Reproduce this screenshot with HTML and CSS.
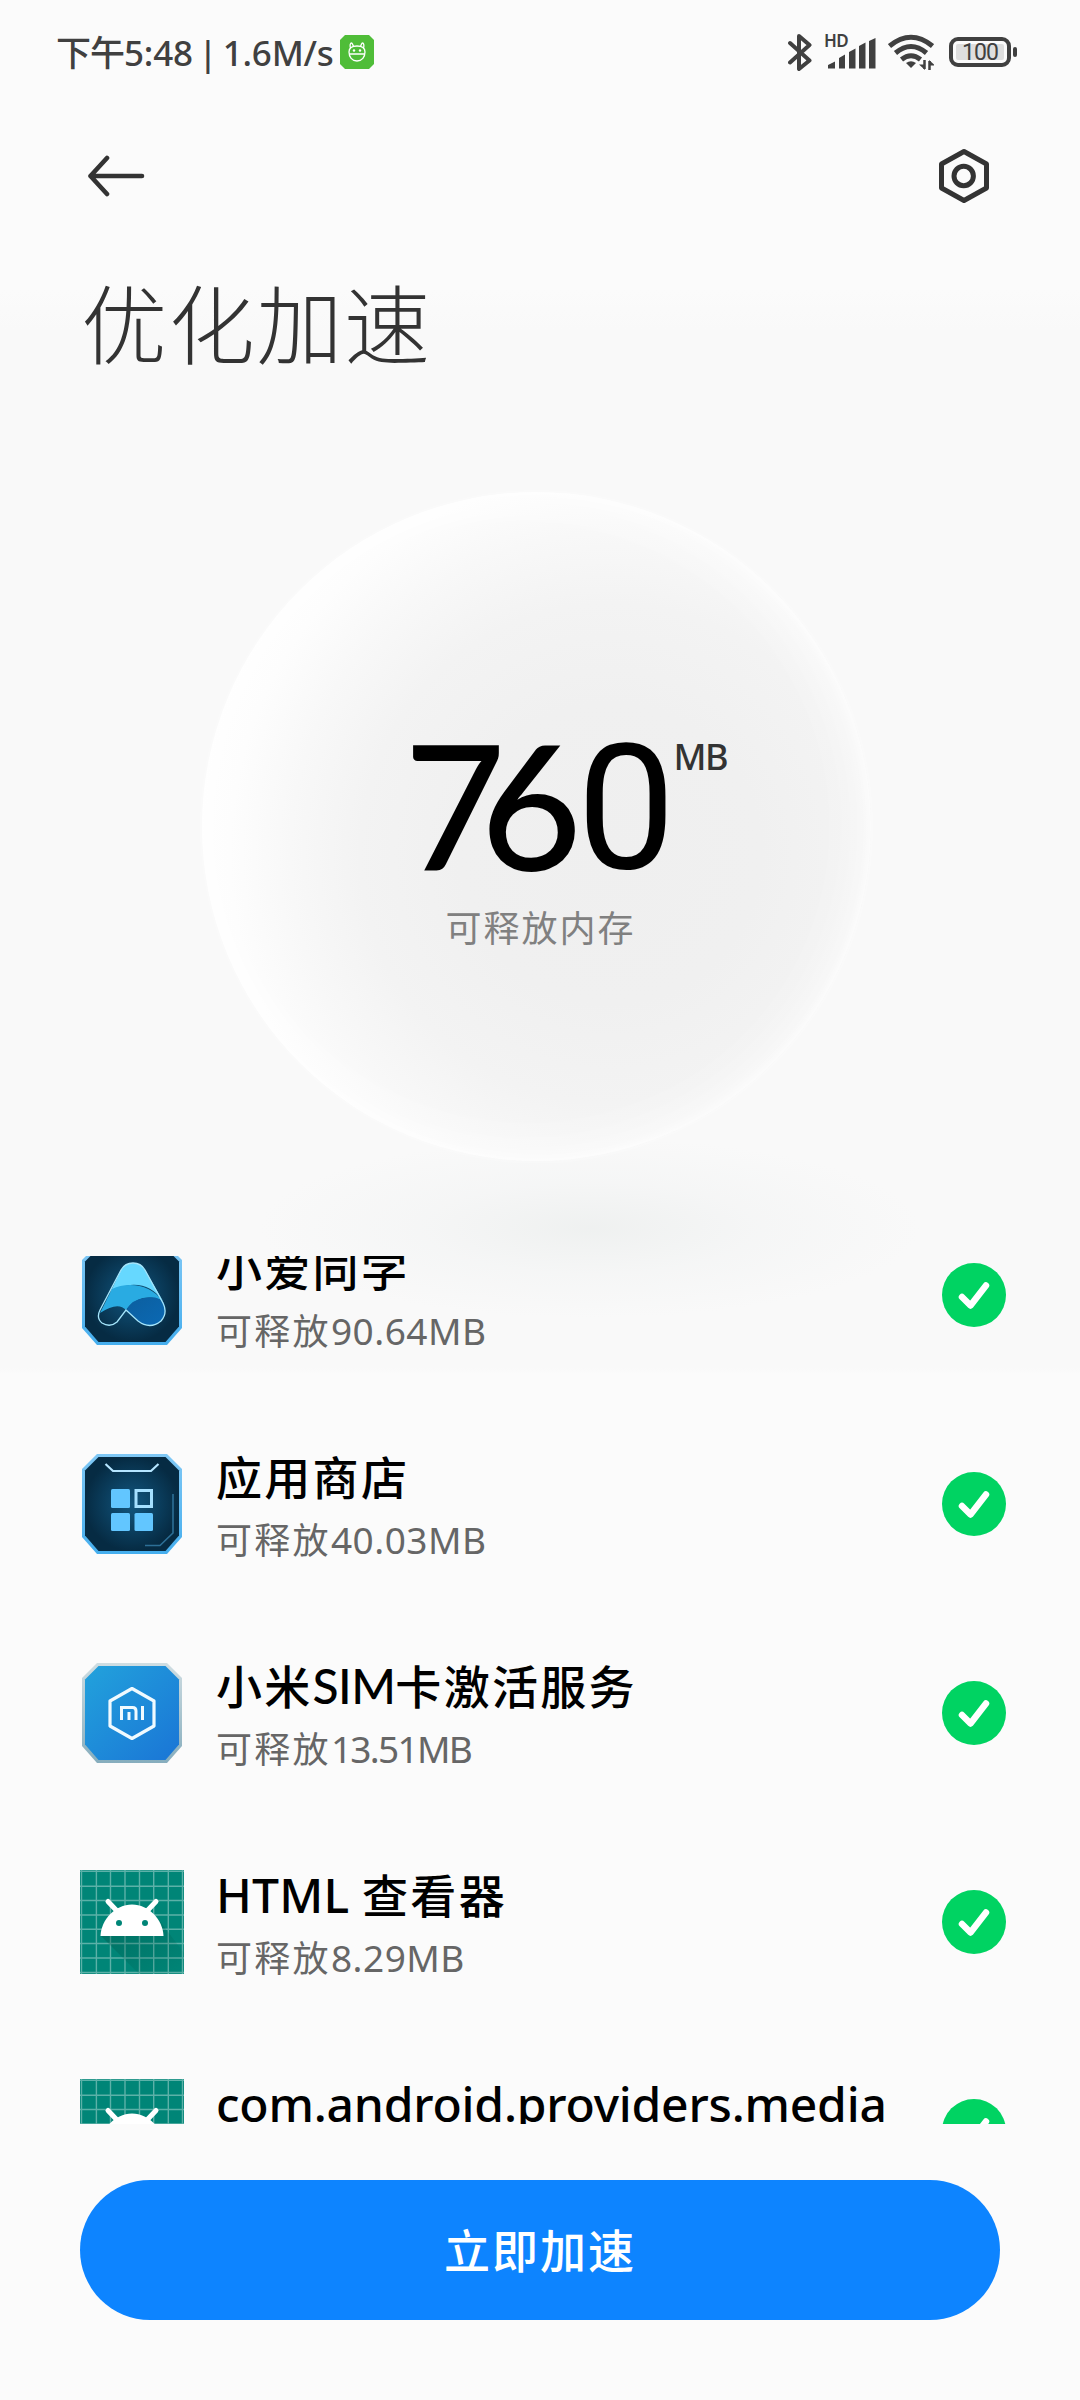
FILE: index.html
```html
<!DOCTYPE html>
<html lang="zh-CN">
<head>
<meta charset="utf-8">
<title>优化加速</title>
<link rel="stylesheet" href="styles.css">
</head>
<body>
<svg width="0" height="0" class="defs" aria-hidden="true">
  <defs>
    <radialGradient id="navy"><stop offset="0" stop-color="#12567f"/><stop offset=".55" stop-color="#0b3f5f"/><stop offset="1" stop-color="#062b43"/></radialGradient>
    <linearGradient id="edge" x1="0" y1="0" x2="0" y2="1"><stop offset="0" stop-color="#80c8f5"/><stop offset="1" stop-color="#45aeee"/></linearGradient>
    <linearGradient id="simEdge" x1="0" y1="0" x2="0" y2="1"><stop offset="0" stop-color="#cfdde2"/><stop offset="1" stop-color="#86adbd"/></linearGradient>
    <linearGradient id="sim" x1="0" y1="0" x2="1" y2="1"><stop offset="0" stop-color="#22a2dc"/><stop offset="1" stop-color="#1a75d6"/></linearGradient>
    <linearGradient id="wave" x1="0" y1="0" x2="1" y2="1"><stop offset="0" stop-color="#0c5f9f"/><stop offset="1" stop-color="#0b69b4"/></linearGradient>
    <linearGradient id="cast" x1="0" y1="0" x2="1" y2="1"><stop offset="0" stop-color="#004d40" stop-opacity=".4"/><stop offset="1" stop-color="#004d40" stop-opacity="0"/></linearGradient>
    <g id="droid">
      <path fill="#008577" d="M0 0H104V104H0Z"/>
      <path fill="none" stroke="#fff" stroke-opacity=".36" stroke-width="1.400" d="M1.500 0V104M16.400 0V104M30.500 0V104M45 0V104M59.500 0V104M73.700 0V104M88.300 0V104M102.500 0V104M0 1.300H104M0 16.300H104M0 30.500H104M0 45H104M0 59.300H104M0 73.500H104M0 88H104M0 102.500H104"/>
      <path fill="url(#cast)" d="M21 66L59 104H104V83L76 46Z"/>
      <path fill="#fff" d="M20.500 66C21 50 35 34.500 52 34.500S83 50 83.500 66Z"/>
      <path stroke="#fff" stroke-width="5" stroke-linecap="round" d="M28 31.500L37 41M76 31.500L67 41"/>
      <circle cx="39" cy="53" r="3" fill="#008577"/><circle cx="65" cy="53" r="3" fill="#008577"/>
    </g>
    <g id="tick"><circle cx="32" cy="32" r="32" fill="#00d362"/><path d="M20 34L28.500 42.500L44 22.500" fill="none" stroke="#fff" stroke-width="6.500" stroke-linecap="round" stroke-linejoin="round"/></g>
  </defs>
</svg>
<div class="screen">
  <div class="statusbar">
    <span class="clock"><span class="han">下午</span>5:48 | 1.6M/s</span>
    <svg class="notice" width="34" height="34" viewBox="0 0 34 34"><path d="M5 0H29L34 5V29L29 34H5L0 29V5Z" fill="#4fbd38"/><path d="M9 17C9 13 12 11 17 11S25 13 25 17C25 22 22 26 17 26S9 22 9 17ZM9 19H25M10.500 13.500C9.500 10 10.500 8 11.500 8S12.500 10 13.500 11M23.500 13.500C24.500 10 23.500 8 22.500 8S21.500 10 20.500 11" fill="none" stroke="#fff" stroke-width="1.300"/><circle cx="14" cy="15.500" r="1.200" fill="#fff"/><circle cx="20" cy="15.500" r="1.200" fill="#fff"/></svg>
    <div class="sys">
      <svg width="24" height="39" viewBox="0 0 24 39"><path d="M2 10L21.500 27.500L11 36V3L21.500 12L2 29.500" fill="none" stroke="#404040" stroke-width="4" stroke-linejoin="round" stroke-linecap="round"/></svg>
      <div class="signal">
        <span class="hd">HD</span>
        <svg width="48" height="31" viewBox="0 0 48 31" fill="#404040"><path d="M0 27L7 23.500V30.500H0ZM11 20L17 16.500V30.500H11ZM21 14L27.500 10.500V30.500H21ZM31 8L37.500 4.500V30.500H31ZM41 3L47.500 0V30.500H41Z"/></svg>
      </div>
      <svg class="wifi" width="46" height="37" viewBox="0 0 46 37"><g fill="none" stroke="#404040" stroke-width="5"><path d="M1.500 12Q23 -5.500 44.500 12"/><path d="M7.500 19Q23 6 38.500 19"/><path d="M13.500 25.500Q23 18 32.500 25.500"/></g><path d="M18 29Q23 25.500 28 29L23 34Z" fill="#404040"/><path d="M36.500 26V35M41.500 36V27" stroke="#404040" stroke-width="2.500"/><path d="M31 30.500H37V36ZM47 31.500H41V26Z" fill="#404040"/></svg>
      <div class="battery"><span class="level">100</span></div>
    </div>
  </div>

  <div class="appbar">
    <svg width="58" height="42" viewBox="0 0 58 42"><path d="M20 3L3.500 21L20 39M3.500 21H55" fill="none" stroke="#333" stroke-width="4.600" stroke-linecap="round" stroke-linejoin="round"/></svg>
    <svg width="52" height="56" viewBox="0 0 52 56" fill="none" stroke="#333" stroke-width="5"><path stroke-linejoin="round" d="M26 3.500L48.500 16V40L26 52.500L3.500 40V16Z"/><circle cx="25.700" cy="28" r="9.700"/></svg>
  </div>
  <h1 class="title">优化加速</h1>

  <div class="hero">
    <div class="sphere">
      <div class="amount"><span class="seven">7</span><span class="six">6</span><span class="zero">0</span><sup class="unit">MB</sup></div>
      <div class="caption">可释放内存</div>
    </div>
  </div>

  <div class="list">
    <div class="rows">
      <div class="row">
        <svg class="icon" viewBox="0 0 104 104"><path fill="url(#edge)" d="M17 2H87L102 17V85L87 102H17L2 85V17Z"/><path fill="url(#navy)" d="M18.500 5H85.500L99 18.500V83.500L85.500 99H18.500L5 83.500V18.500Z"/>
          <path fill="#66d8ff" d="M41 27Q45 20 53 20T65 27L83 58Q70 40 50 42Q37 44 30 50Z"/>
          <path fill="#29abe2" d="M32 46Q40 42 50 42Q70 42 83 58Q74 53 63 55Q52 58 46 67Q38 58 20 70Z"/>
          <path fill="url(#wave)" d="M46 67Q53 56 64 55Q78 52 84 60Q88 72 79 80Q68 86 58 78Z"/>
          <path fill="none" stroke="#a5e5fb" stroke-width="1.300" d="M41 27Q45 20 53 20T65 27L83 60Q88 70 81 78Q70 87 58 78L46 67L37 79Q30 85 22 80Q16 75 20 67Z"/></svg>
        <div class="text"><div class="name"><span class="han">小爱同学</span></div><div class="free"><span class="han">可释放</span>90.64MB</div></div>
        <svg class="check" viewBox="0 0 64 64"><use href="#tick"/></svg>
      </div>
      <div class="row">
        <svg class="icon" viewBox="0 0 104 104"><path fill="url(#edge)" d="M17 2H87L102 17V85L87 102H17L2 85V17Z"/><path fill="url(#navy)" d="M18.500 5H85.500L99 18.500V83.500L85.500 99H18.500L5 83.500V18.500Z"/>
          <path fill="none" stroke="#b5e5ff" stroke-width="2.200" d="M25.500 12L33 19H71L78.500 12"/><path fill="none" stroke="#2c6f96" stroke-width="1.600" d="M93 42V81L80 93.500H65"/>
          <g fill="#62c6ff"><rect x="31" y="37" width="19" height="19" rx="1.500"/><rect x="31" y="61" width="19" height="18" rx="1.500"/><rect x="54.500" y="61" width="18.500" height="18" rx="1.500"/></g><rect x="56" y="38.500" width="15.500" height="16" fill="none" stroke="#a5e0ff" stroke-width="3"/></svg>
        <div class="text"><div class="name"><span class="han">应用商店</span></div><div class="free"><span class="han">可释放</span>40.03MB</div></div>
        <svg class="check" viewBox="0 0 64 64"><use href="#tick"/></svg>
      </div>
      <div class="row">
        <svg class="icon" viewBox="0 0 104 104"><path fill="url(#simEdge)" d="M17 2H87L102 17V85L87 102H17L2 85V17Z"/><path fill="url(#sim)" d="M18.500 5H85.500L99 18.500V83.500L85.500 99H18.500L5 83.500V18.500Z"/>
          <g fill="none" stroke="#f0faff"><path stroke-width="3.200" stroke-linejoin="round" d="M52 27.500L74 40V65L52 77.500L30 65V40Z"/><path stroke-width="3" d="M41.500 59V46.500H52.500Q56 46.500 56 50V59M49 51V59M62.500 45V59"/></g></svg>
        <div class="text"><div class="name"><span class="han">小米</span><span class="sim">SIM</span><span class="han">卡激活服务</span></div><div class="free"><span class="han">可释放</span><span class="ones">13.51MB</span></div></div>
        <svg class="check" viewBox="0 0 64 64"><use href="#tick"/></svg>
      </div>
      <div class="row">
        <svg class="icon" viewBox="0 0 104 104"><use href="#droid"/></svg>
        <div class="text"><div class="name"><span class="html">HTML </span><span class="han">查看器</span></div><div class="free"><span class="han">可释放</span>8.29MB</div></div>
        <svg class="check" viewBox="0 0 64 64"><use href="#tick"/></svg>
      </div>
      <div class="row">
        <svg class="icon" viewBox="0 0 104 104"><use href="#droid"/></svg>
        <div class="text"><div class="name"><span class="package">com.android.providers.media</span></div></div>
        <svg class="check" viewBox="0 0 64 64"><use href="#tick"/></svg>
      </div>
    </div>
  </div>

  <div class="footer"><button class="boost">立即加速</button></div>
</div>
</body>
</html>
```
FILE: styles.css
```css
* { box-sizing: border-box; }
body { margin: 0; background: #fbfbfb; font-family: "Noto Sans", "Noto Sans CJK SC", sans-serif; }
svg { display: block; flex: none; }
.defs { position: absolute; }
.screen {
  width: 1080px; height: 2400px; overflow: hidden;
  display: flex; flex-direction: column;
  background:
    radial-gradient(330px 90px at 590px 1228px, rgba(232, 235, 234, .6), rgba(238, 240, 240, .35) 50%, rgba(249, 249, 249, 0)),
    linear-gradient(#fbfbfb 290px, #f9f9f9 330px, #f9f9f9 1368px, #fbfbfb 1374px);
}

.statusbar { height: 104px; padding: 0 62px 0 56px; display: flex; align-items: center; }
.clock { width: 276px; font-size: 35px; line-height: 48px; font-weight: 500; color: #404040; white-space: pre; letter-spacing: -.2px; word-spacing: -3.500px; padding-top: 1px; }
.clock .han { letter-spacing: -1px; }
.notice { margin-left: 8px; }
.sys { margin-left: auto; display: flex; align-items: center; }
.signal { position: relative; width: 52px; height: 34px; margin-left: 12px; display: flex; align-items: flex-end; justify-content: flex-end; }
.hd { position: absolute; left: 0; top: -2px; font-size: 17px; line-height: 16px; font-weight: 600; letter-spacing: -.5px; color: #404040; }
.wifi { margin-left: 12px; }
.battery { position: relative; width: 62px; height: 30px; margin: 0 7px 0 15px; border: 4px solid #404040; border-radius: 9px; padding: 3px; }
.battery::after { content: ""; position: absolute; right: -10px; top: 6px; width: 4px; height: 10px; border-radius: 2px; background: #404040; }
.level { display: block; height: 16px; border-radius: 2px; background: #dedede; font: 400 23px/17px Roboto, sans-serif; letter-spacing: -1px; color: #404040; text-align: center; }

.appbar { height: 144px; padding: 0 90px 0 87px; display: flex; align-items: center; justify-content: space-between; }
.title { margin: 0; height: 154px; padding-left: 81px; font-size: 86px; line-height: 154px; font-weight: 300; letter-spacing: 1.700px; color: #333; }

.hero { height: 854px; padding: 90px 0 0 202px; }
.sphere {
  width: 669px; height: 669px; border-radius: 50%; padding-top: 226px; text-align: center;
  background: radial-gradient(circle at 61% 54%, #efefef 0, #f0f0f0 150px, #f3f3f3 250px, #f8f8f8 320px, #fdfdfd 380px, #ffffff 430px);
  box-shadow: inset 0 0 60px rgba(255, 255, 255, .9), inset 0 0 12px rgba(255, 255, 255, .8), 0 0 6px rgba(255, 255, 255, .5);
}
.amount { height: 166px; padding-left: 202px; display: flex; align-items: flex-start; font: 500 175px/166px Lato, sans-serif; color: #000; }
.seven { margin: 2px -25px 0 0; }
.six { margin: 2px -5px 0 0; }
.zero { margin-top: 8px; font-family: Roboto, sans-serif; font-weight: 400; }
.unit { margin: 21px 0 0 -2px; font: 500 36px/36px "Noto Sans", sans-serif; letter-spacing: -1.500px; color: #333; }
.caption { margin: 23px 0 0 8px; font-size: 36px; line-height: 44px; letter-spacing: 2px; color: #808080; }

.list { height: 868px; overflow: hidden; }
.rows { margin-top: -66px; }
.row { height: 209px; padding: 48px 74px 0 80px; display: flex; align-items: flex-start; }
.icon { width: 104px; height: 104px; margin-top: 5px; }
.text { margin-left: 32px; flex: 1; white-space: pre; }
.name { height: 60px; font-size: 48px; line-height: 60px; font-weight: 500; color: #000; }
.name .han { font-size: 46px; letter-spacing: 2.300px; }
.sim { font-family: Lato, sans-serif; letter-spacing: -.6px; }
.html { letter-spacing: .2px; }
.package { letter-spacing: -.2px; }
.free { height: 50px; margin-top: 8px; font-size: 37px; line-height: 50px; color: #666; letter-spacing: .5px; }
.free .han { font-size: 36px; letter-spacing: 2.300px; }
.ones { letter-spacing: -1.700px; }
.check { width: 64px; height: 64px; margin-top: 25px; }

.footer { flex: 1; padding: 56px 80px 0; background: #fbfbfb; }
.boost { display: block; width: 920px; height: 140px; padding: 0; border: 0; border-radius: 70px; background: #0d84ff; color: #fff; font: 500 46px/140px "Noto Sans", "Noto Sans CJK SC", sans-serif; letter-spacing: 2px; }
```
